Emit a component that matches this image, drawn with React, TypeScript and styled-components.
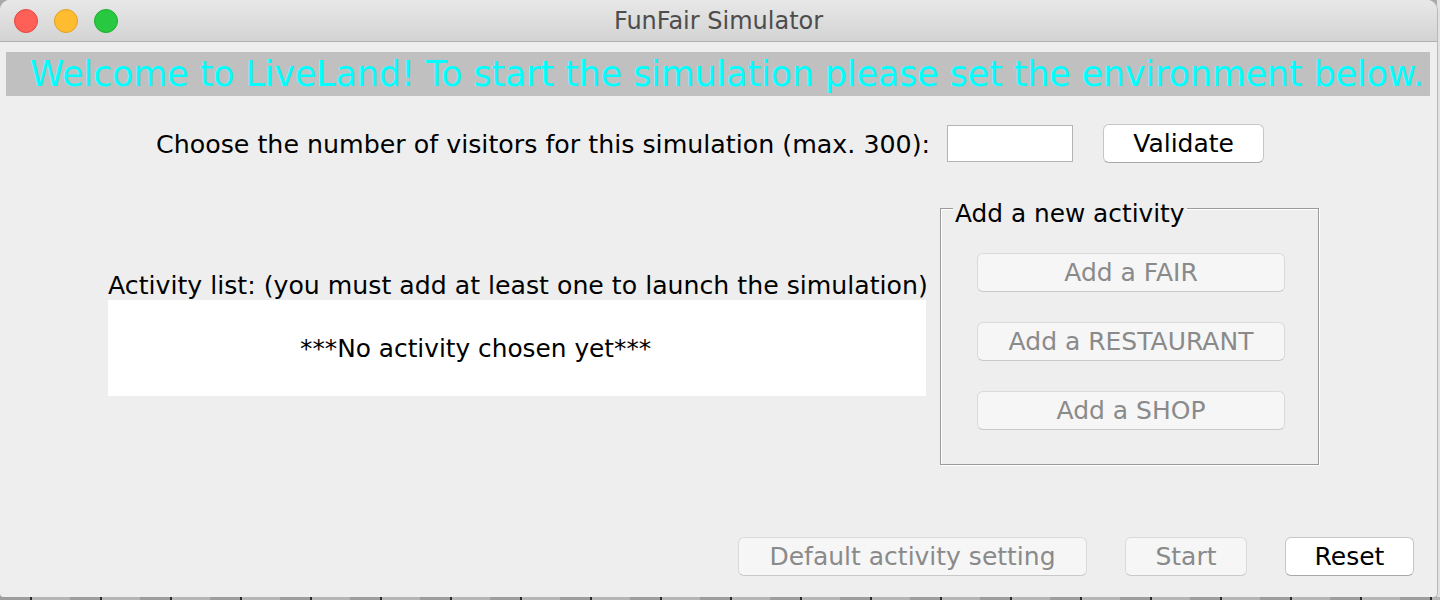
import React from "react";
import styled, { createGlobalStyle } from "styled-components";

const Global = createGlobalStyle`
  html, body { margin: 0; padding: 0; }
  body {
    background: #a9a9a9;
    font-family: "DejaVu Sans", "Liberation Sans", sans-serif;
    width: 1440px;
    height: 600px;
    overflow: hidden;
  }
`;

const Desktop = styled.div`
  width: 1440px;
  height: 600px;
  background: linear-gradient(to right, transparent 1437px, #e2e2e2 1437px);
  display: flex;
  flex-direction: column;
`;

const Window = styled.div`
  width: 1437px;
  height: 597px;
  background: #eeeeee;
  border-radius: 10px 10px 4px 4px;
  box-shadow: 1px 0 0 #b9b9b9;
  display: flex;
  flex-direction: column;
  overflow: hidden;
`;

const TitleBar = styled.div`
  height: 41px;
  flex: none;
  background: linear-gradient(#e8e8e8, #d3d3d3);
  border-bottom: 1px solid #b1b1b1;
  display: grid;
  grid-template-columns: 1fr auto 1fr;
  align-items: center;
`;

const Lights = styled.div`
  display: flex;
  gap: 16px;
  padding-left: 14px;
`;

const Light = styled.span<{ $fill: string; $edge: string }>`
  width: 22px;
  height: 22px;
  border-radius: 50%;
  background: ${(p) => p.$fill};
  border: 1px solid ${(p) => p.$edge};
`;

const Title = styled.div`
  font-size: 24px;
  color: #4d4d4d;
  line-height: 28px;
`;

const Banner = styled.div`
  margin: 10px 7px 0 6px;
  height: 44px;
  background: #c0c0c0;
  color: #00ffff;
  font-size: 34.7px;
  line-height: 44px;
  padding-left: 24px;
  white-space: nowrap;
  overflow: hidden;
`;

const VisitorsRow = styled.div`
  margin-top: 27px;
  height: 40px;
  padding-left: 156px;
  display: flex;
  align-items: center;
`;

const Label = styled.span`
  font-size: 25.2px;
  line-height: 29px;
  color: #000;
  white-space: nowrap;
`;

const VisitorsLabel = styled(Label)`
  font-size: 25.3px;
  padding-top: 3px;
`;

const ListText = styled(Label)`
  font-size: 24.8px;
`;

const NumberField = styled.input`
  box-sizing: border-box;
  width: 126px;
  height: 37px;
  margin-left: 17px;
  border: 1px solid #b4b4b4;
  background: #fff;
  outline: none;
`;

const Button = styled.button<{ $w: number; $enabled?: boolean }>`
  box-sizing: border-box;
  width: ${(p) => p.$w}px;
  height: 39px;
  padding: 0;
  border-radius: 6px;
  border: 1px solid ${(p) => (p.$enabled ? "#c6c6c6" : "#dadada")};
  border-bottom-color: ${(p) => (p.$enabled ? "#a9a9a9" : "#c9c9c9")};
  background: ${(p) => (p.$enabled ? "#ffffff" : "#f6f6f6")};
  color: ${(p) => (p.$enabled ? "#000000" : "#8a8a8a")};
  font-family: "DejaVu Sans", "Liberation Sans", sans-serif;
  font-size: 25px;
  line-height: 29px;
  white-space: nowrap;
  display: flex;
  align-items: center;
  justify-content: center;
`;

const ValidateSlot = styled.div`
  margin-left: 30px;
`;

const Main = styled.div`
  margin-top: 45px;
  padding-left: 108px;
  display: grid;
  grid-template-columns: 818px 379px;
  column-gap: 14px;
  align-items: start;
`;

const ListColumn = styled.div`
  padding-top: 63px;
  display: flex;
  flex-direction: column;
`;

const ListBox = styled.div`
  height: 96px;
  background: #ffffff;
  display: flex;
  align-items: center;
  padding-left: 192px;
`;

const GroupBox = styled.div`
  position: relative;
  box-sizing: border-box;
  height: 257px;
  border: 1px solid #9b9b9b;
  box-shadow: 1px 1px 0 #ffffff, inset 1px 1px 0 #ffffff;
  padding: 44px 0 0 36px;
  display: flex;
  flex-direction: column;
  gap: 30px;
`;

const GroupTitle = styled.span`
  position: absolute;
  top: -10px;
  left: 12px;
  padding: 0 2px;
  background: #eeeeee;
  font-size: 24.8px;
  line-height: 29px;
  color: #000;
  white-space: nowrap;
`;

const Footer = styled.div`
  margin-top: auto;
  padding: 0 23px 21px 0;
  display: flex;
  justify-content: flex-end;
  gap: 38px;
`;

const DeskStrip = styled.div`
  flex: 1;
  background: repeating-linear-gradient(to right, #9d9d9d 0 30px, #2a2a2a 30px 32px, #b5b5b5 32px 70px);
`;

export default function App() {
  return (
    <>
      <Global />
      <Desktop>
        <Window>
          <TitleBar>
            <Lights>
              <Light $fill="#fe5f57" $edge="#e2463f" />
              <Light $fill="#febc2e" $edge="#dfa023" />
              <Light $fill="#28c840" $edge="#1dad2b" />
            </Lights>
            <Title>FunFair Simulator</Title>
            <span />
          </TitleBar>
          <Banner>Welcome to LiveLand! To start the simulation please set the environment below.</Banner>
          <VisitorsRow>
            <VisitorsLabel>Choose the number of visitors for this simulation (max. 300):</VisitorsLabel>
            <NumberField type="text" />
            <ValidateSlot>
              <Button $w={161} $enabled>Validate</Button>
            </ValidateSlot>
          </VisitorsRow>
          <Main>
            <ListColumn>
              <Label>Activity list: (you must add at least one to launch the simulation)</Label>
              <ListBox>
                <ListText>***No activity chosen yet***</ListText>
              </ListBox>
            </ListColumn>
            <GroupBox>
              <GroupTitle>Add a new activity</GroupTitle>
              <Button $w={308}>Add a FAIR</Button>
              <Button $w={308}>Add a RESTAURANT</Button>
              <Button $w={308}>Add a SHOP</Button>
            </GroupBox>
          </Main>
          <Footer>
            <Button $w={349}>Default activity setting</Button>
            <Button $w={122}>Start</Button>
            <Button $w={129} $enabled>Reset</Button>
          </Footer>
        </Window>
        <DeskStrip />
      </Desktop>
    </>
  );
}
